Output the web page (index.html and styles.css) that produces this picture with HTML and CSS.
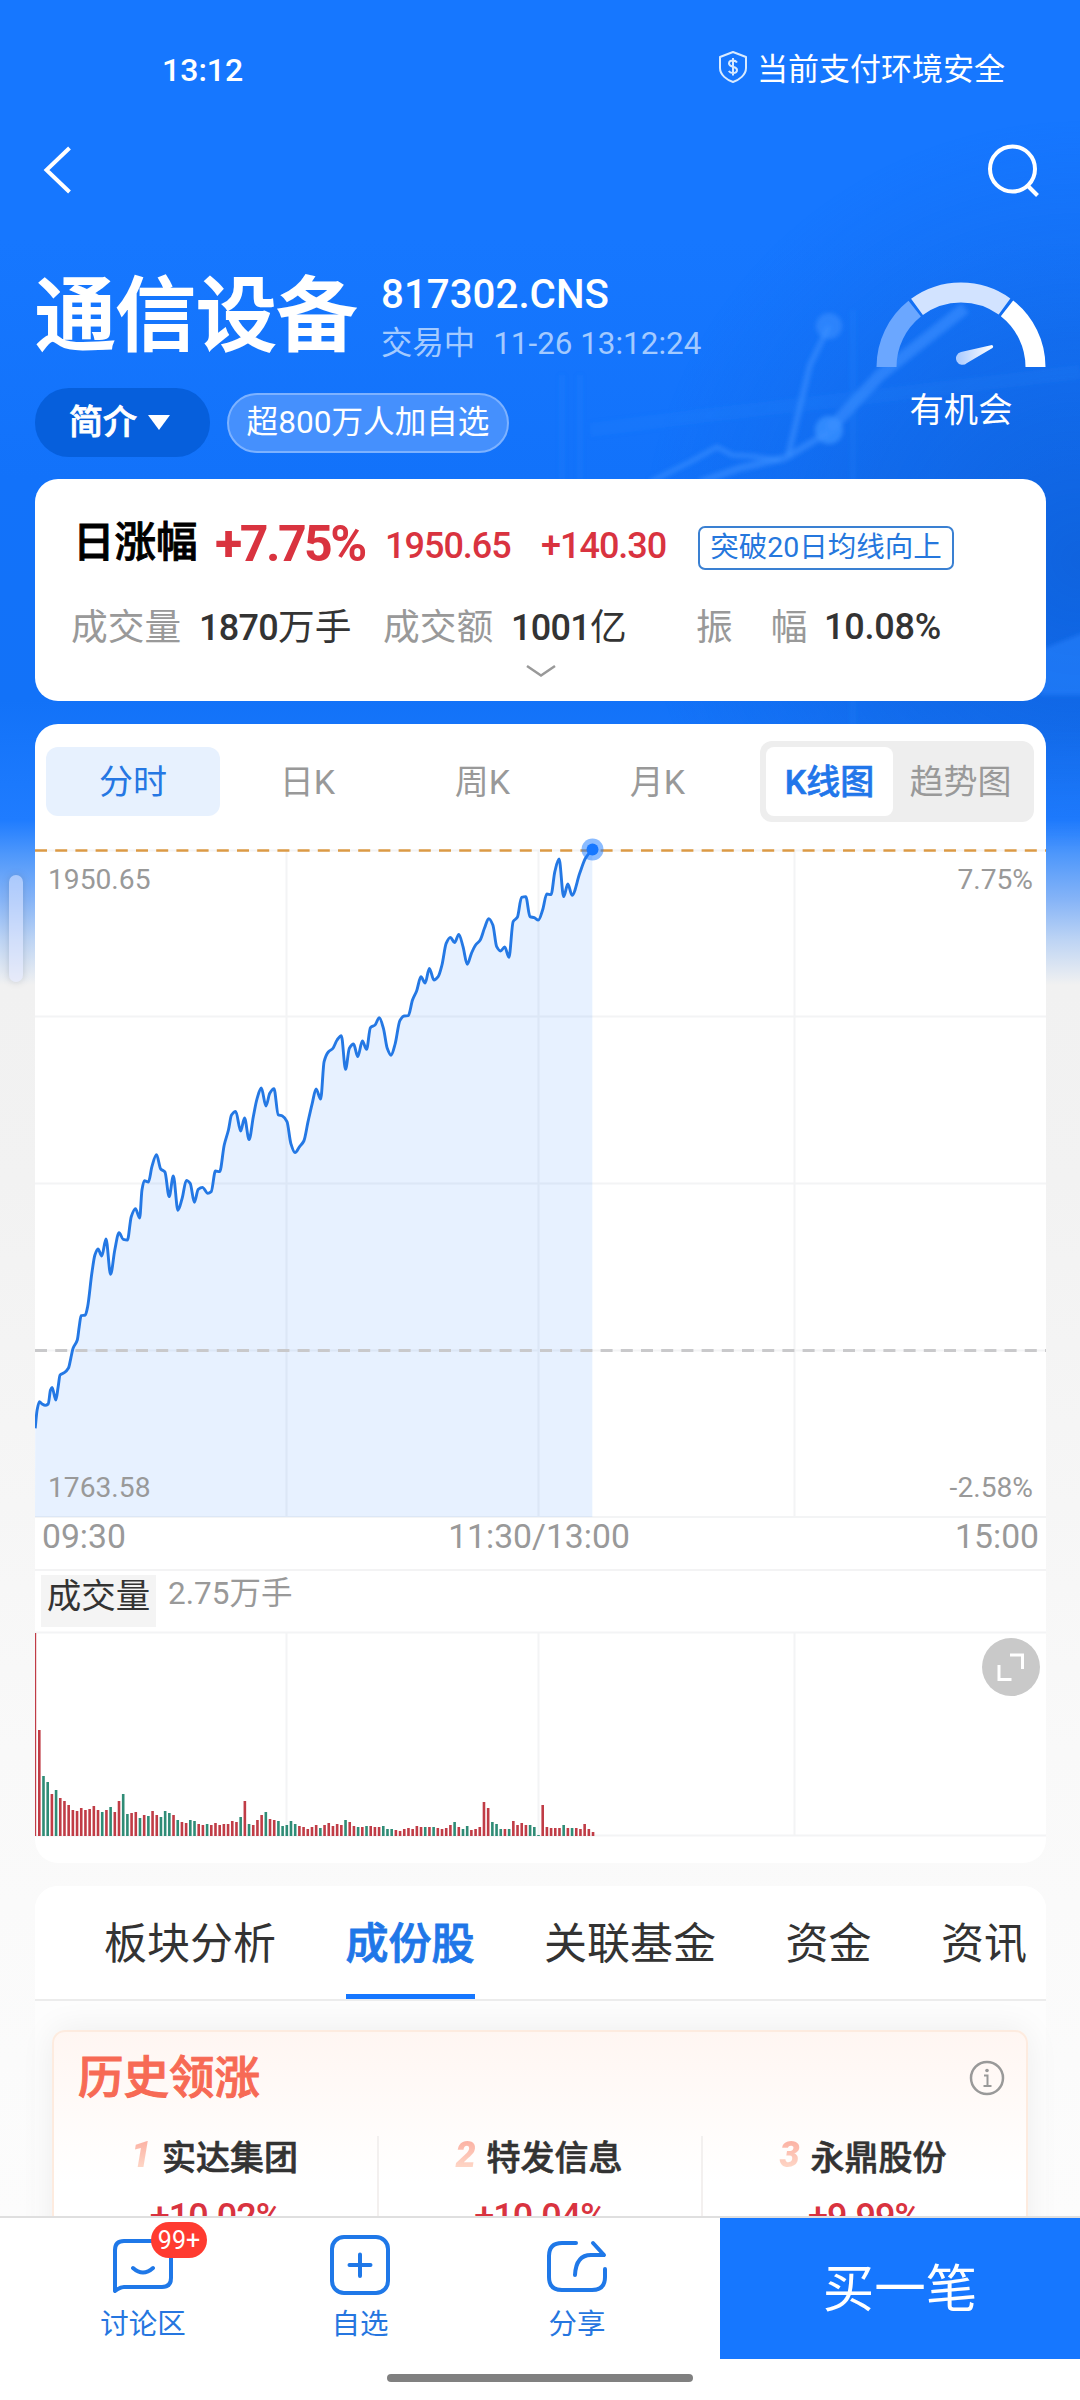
FILE: index.html
```html
<!DOCTYPE html>
<html lang="zh-CN">
<head>
<meta charset="utf-8">
<title>通信设备</title>
<link rel="stylesheet" href="styles.css">
</head>
<body>
<div class="app">
  <main class="page">
    <svg class="backdrop" viewBox="0 0 1080 985" aria-hidden="true">
      <defs>
        <radialGradient id="shade" gradientUnits="userSpaceOnUse" cx="1080" cy="560" r="440"><stop offset="0" stop-color="#0d55c4" stop-opacity=".5"/><stop offset=".5" stop-color="#0f5ace" stop-opacity=".32"/><stop offset="1" stop-color="#1060d8" stop-opacity="0"/></radialGradient>
        <filter id="soft" filterUnits="userSpaceOnUse" x="0" y="200" width="1080" height="700"><feGaussianBlur stdDeviation="2.2"/></filter>
        <linearGradient id="fade" x1="0" y1="0" x2="0" y2="1"><stop offset="0" stop-color="#fff"/><stop offset=".74" stop-color="#fff"/><stop offset=".86" stop-color="#000"/></linearGradient>
        <mask id="fademask"><rect width="1080" height="985" fill="url(#fade)"/></mask>
      </defs>
      <g mask="url(#fademask)">
        <rect width="1080" height="985" fill="url(#shade)"/>
        <g filter="url(#soft)" fill="none" stroke="#3a90ff" stroke-opacity=".6" stroke-linejoin="round">
          <path d="M650 482L690 462L717 447L732 455L750 456L780 460" stroke-width="5"/>
          <path d="M788 456L810 365L829 326" stroke-width="6"/>
          <path d="M700 482L740 468L785 458L829 432" stroke-width="7"/>
          <path d="M829 430L880 375L965 308" stroke-width="12"/>
          <path d="M853 310V790M562 375V480M580 375V480" stroke-width="6" stroke-opacity=".12"/>
          <path d="M590 430L700 416L860 398L1080 372" stroke-width="14" stroke-opacity=".1"/>
          <circle cx="829" cy="326" r="13" fill="#3a90ff" fill-opacity=".6" stroke="none"/>
          <circle cx="829" cy="430" r="14" fill="#3a90ff" fill-opacity=".8" stroke="none"/>
          <path d="M1040 650L1090 630V695H1040Z" fill="#2c84ff" fill-opacity=".55" stroke="none"/>
        </g>
      </g>
    </svg>

    <div class="statusbar">
      <span class="clock">13:12</span>
      <span class="secure">
        <svg width="30" height="34" viewBox="0 0 30 34" fill="none" stroke="#d8eaff" stroke-width="2"><path d="M15 2L28 7V18C28 25 21 30 15 32C9 30 2 25 2 18V7Z" stroke-linejoin="round"/><path d="M19 12.500C18 11 16.500 10.500 15 10.500C12.500 10.500 11 11.700 11 13.500C11 17.800 19 15.800 19 20C19 22 17.300 23 15 23C13 23 11.600 22.300 10.800 21M15 8V25.500"/></svg>
        当前支付环境安全
      </span>
    </div>

    <div class="navbar">
      <svg width="34" height="50" viewBox="0 0 34 50" fill="none" stroke="#fff" stroke-width="4"><path d="M31.500 3L8.500 25L31.500 47"/></svg>
      <svg width="54" height="54" viewBox="0 0 54 54" fill="none" stroke="#fff" stroke-width="4"><circle cx="25.500" cy="26" r="22.500"/><path d="M40 42L50.500 52.500"/></svg>
    </div>

    <header class="head">
      <div class="head-main">
        <div class="title-row">
          <h1>通信设备</h1>
          <div class="meta">
            <div class="code">817302.CNS</div>
            <div class="state"><span>交易中</span><span>11-26 13:12:24</span></div>
          </div>
        </div>
        <div class="chips">
          <span class="intro">简介<i class="tri"></i></span>
          <span class="fans">超800万人加自选</span>
        </div>
      </div>
      <div class="gauge">
        <svg width="170" height="86" viewBox="0 0 170 86">
          <defs><linearGradient id="needle"><stop offset="0" stop-color="#a9caff"/><stop offset="1" stop-color="#fff"/></linearGradient></defs>
          <g fill="none" stroke-width="20">
            <path d="M10.500 85A74.500 74.500 0 0 1 38.700 26.700" stroke="#6ba7ff"/>
            <path d="M41 24.900A74.500 74.500 0 0 1 128.500 24.500" stroke="#d2e3ff"/>
            <path d="M131 26.400A74.500 74.500 0 0 1 159.500 85" stroke="#fff"/>
          </g>
          <path d="M85 70L116 63Q118 64 116.500 66L91 81A6.500 6.500 0 1 1 85 70Z" fill="url(#needle)"/>
        </svg>
        <span>有机会</span>
      </div>
    </header>

    <section class="card quote">
      <div class="quote-top">
        <span class="q-name">日涨幅</span><span class="q-pct">+7.75%</span><span class="q-num">1950.65</span><span class="q-num q-diff">+140.30</span><span class="q-tag">突破20日均线向上</span>
      </div>
      <div class="quote-row">
        <span class="lab">成交量</span><span class="val"><b>1870</b>万手</span>
        <span class="lab">成交额</span><span class="val"><b>1001</b>亿</span>
        <span class="lab lab-wide"><span>振</span><span>幅</span></span><span class="val val-num"><b>10.08%</b></span>
      </div>
      <svg class="more" width="30" height="14" viewBox="0 0 30 14" fill="none" stroke="#999" stroke-width="2.500"><path d="M1 2L15 11.500L29 2"/></svg>
    </section>

    <section class="card chart">
      <div class="periods">
        <span class="period on">分时</span><span class="period">日K</span><span class="period">周K</span><span class="period">月K</span>
        <div class="switch"><span class="sw on">K线图</span><span class="sw">趋势图</span></div>
      </div>
      <div class="price">
        <svg class="price-svg" width="1011" height="690" viewBox="0 0 1011 690">
          <path class="grid" d="M0 20.500H1011M0 186.500H1011M0 353.500H1011M0 520.500H1011M0 687H1011M251.500 20V687M503.500 20V687M759.500 20V687"/>
          <path id="area" fill="#1677ff" fill-opacity=".1"/>
          <path d="M0 520.500H1011" stroke="#c9c9cb" stroke-width="3" stroke-dasharray="12 8.200"/>
          <path d="M0 20.500H1011" stroke="#dc9a45" stroke-width="2.500" stroke-dasharray="12 8.200"/>
          <path id="line" fill="none" stroke="#2478e4" stroke-width="2.900" stroke-linejoin="round"/>
          <circle cx="557.500" cy="19.500" r="11" fill="#1677ff" fill-opacity=".5"/><circle cx="557.500" cy="19.500" r="6" fill="#1677ff"/>
        </svg>
        <span class="axis tl">1950.65</span><span class="axis tr">7.75%</span>
        <span class="axis bl">1763.58</span><span class="axis br">-2.58%</span>
      </div>
      <div class="times"><span>09:30</span><span>11:30/13:00</span><span>15:00</span></div>
      <div class="vol-head"><span class="vol-name">成交量</span><span class="vol-val">2.75万手</span></div>
      <div class="volume">
        <svg id="bars" class="vol-svg" width="1011" height="206" viewBox="0 0 1011 206">
          <path class="grid" d="M0 1.500H1011M0 204.500H1011M251.500 1V204M503.500 1V204M759.500 1V204"/>
        </svg>
        <span class="expand"><svg width="58" height="58" viewBox="0 0 58 58" fill="none" stroke="#fff" stroke-width="3"><path d="M28 17H40.500V31M17 27V41.500H29.500"/></svg></span>
      </div>
    </section>

    <section class="card parts">
      <nav class="tabs"><span>板块分析</span><span class="on">成份股</span><span>关联基金</span><span>资金</span><span>资讯</span></nav>
      <div class="leaders">
        <div class="leaders-head">
          <h2>历史领涨</h2>
          <svg width="36" height="36" viewBox="0 0 36 36" fill="none" stroke="#999" stroke-width="2.500"><circle cx="18" cy="18" r="16"/><path d="M15 15.500H18.500V25.500M14.500 26H22.500" stroke-width="2"/><circle cx="18" cy="10.500" r="1.800" fill="#999" stroke="none"/></svg>
        </div>
        <div class="rank">
          <div class="stock"><div class="s-name"><i>1</i>实达集团</div><div class="s-pct">+10.02%</div></div>
          <div class="stock"><div class="s-name"><i>2</i>特发信息</div><div class="s-pct">+10.04%</div></div>
          <div class="stock"><div class="s-name"><i>3</i>永鼎股份</div><div class="s-pct">+9.99%</div></div>
        </div>
      </div>
    </section>
    <span class="handle"></span>
  </main>

  <footer class="bottom">
    <div class="actions">
      <div class="act">
        <svg width="64" height="64" viewBox="0 0 64 64" fill="none" stroke="#1f78e8" stroke-width="4" stroke-linejoin="round" stroke-linecap="round"><path d="M4 58V17Q4 8 13 8H51Q60 8 60 17V45Q60 54 51 54H13Q9 54 4 58ZM22 35Q32 44 42 35"/></svg>
        <em class="badge">99+</em>
        <span>讨论区</span>
      </div>
      <div class="act">
        <svg width="64" height="64" viewBox="0 0 64 64" fill="none" stroke="#1f78e8" stroke-width="4" stroke-linecap="round"><rect x="4" y="4" width="56" height="56" rx="12"/><path d="M32 21.500V43M21.500 32H42.500"/></svg>
        <span>自选</span>
      </div>
      <div class="act">
        <svg width="64" height="64" viewBox="0 0 64 64" fill="none" stroke="#1f78e8" stroke-width="4" stroke-linecap="round" stroke-linejoin="round"><path d="M31 10H17Q4 10 4 23V44Q4 57 17 57H47Q60 57 60 44V36"/><path d="M48 10L59 22H46Q31 22 30 42"/></svg>
        <span>分享</span>
      </div>
      <div class="buy">买一笔</div>
    </div>
    <div class="home"></div>
  </footer>
</div>
<script src="chart.js"></script>
</body>
</html>
```
FILE: styles.css
```css
* { box-sizing: border-box; }
body { margin: 0; font-family: Roboto, "Noto Sans CJK SC", sans-serif; color: #333; }
h1, h2 { margin: 0; font-weight: 500; }
i, em { font-style: normal; }
svg { display: block; flex: none; }

.app { width: 1080px; height: 2400px; display: flex; flex-direction: column; overflow: hidden; }
.page {
  position: relative; height: 2216px; flex: none; overflow: hidden; white-space: nowrap;
  background: linear-gradient(#1677ff 0, #1677ff 240px, #1272fa 480px, #1272f8 700px, #1f7cff 820px, #4f98fb 855px, #86b4f7 900px, #bdd4f4 940px, #f1f1f1 985px, #f2f2f2 1180px, #f9f9f9 1750px, #fcfcfc 2216px);
}
.backdrop { position: absolute; left: 0; top: 0; width: 1080px; height: 985px; }
.page > div, .page > header, .page > section { position: relative; }

.statusbar { height: 136px; padding: 0 75px 0 162px; display: flex; justify-content: space-between; align-items: center; color: #fff; font-size: 31px; }
.clock { font-size: 32px; font-weight: 500; padding-top: 3px; }
.secure { display: flex; align-items: center; gap: 9px; height: 36px; margin-bottom: 3px; }
.navbar { height: 68px; margin-bottom: 60px; padding: 0 39px 0 38px; display: flex; justify-content: space-between; align-items: center; }

.head { height: 215px; display: flex; justify-content: space-between; padding: 0 34px 0 35px; color: #fff; }
.title-row { height: 124px; display: flex; }
h1 { width: 346px; font-size: 80.500px; line-height: 105px; -webkit-text-stroke: 1.800px #fff; }
.code { font-size: 40.300px; line-height: 48px; margin-top: 7px; font-weight: 500; }
.state { display: flex; gap: 18px; font-size: 31.400px; line-height: 44px; margin-top: 3px; color: #a3caff; }
.chips { display: flex; align-items: center; gap: 17px; height: 69px; }
.intro { width: 175px; height: 69px; border-radius: 34px; background: #065fdc; display: flex; align-items: center; justify-content: center; gap: 11px; padding-right: 6px; font-size: 34px; line-height: 67px; font-weight: 500; -webkit-text-stroke: .8px #fff; }
.tri { border: 11px solid transparent; border-top: 15px solid #fff; border-bottom: 0; }
.fans { width: 282px; height: 60px; border-radius: 30px; border: 2px solid #7db2ff; background: #4590fd; text-align: center; font-size: 31.600px; line-height: 56px; }
.gauge { width: 170px; padding-top: 18px; text-align: center; font-size: 34.300px; line-height: 50px; }
.gauge span { display: block; margin-top: 17px; }

.card { margin: 0 34px 0 35px; background: #fff; border-radius: 23px; }
.quote { height: 222px; padding-top: 38px; }
.quote-top { display: flex; align-items: center; height: 54px; padding-left: 38px; color: #d9333f; }
.q-name { width: 142px; height: 60px; line-height: 57px; color: #000; font-size: 41.500px; font-weight: 500; -webkit-text-stroke: .9px #000; }
.q-pct { width: 170px; font-size: 50px; font-weight: 700; letter-spacing: -2.500px; }
.q-num { width: 156px; font-size: 36px; font-weight: 500; letter-spacing: -1px; padding-top: 4px; }
.q-diff { width: 157px; }
.q-tag { width: 256px; height: 44px; margin-top: 8px; border: 2px solid #3a80d2; border-radius: 7px; color: #2577dd; font-size: 28.500px; line-height: 39px; text-align: center; }
.quote-row { display: grid; grid-template-columns: 128px 184px 128px 185px 128px auto; justify-content: start; height: 70px; align-items: center; padding-left: 36px; margin-top: 18px; font-size: 36.700px; }
.lab { color: #999; }
.lab-wide { display: flex; gap: 38px; }
.val b { font-weight: 500; letter-spacing: -.700px; font-size: 36px; }
.val-num { padding-top: 5px; }
.val-num b { letter-spacing: -.2px; }
.more { margin: 5px auto 0; }

.chart { height: 1139px; margin-top: 23px; padding-top: 17px; }
.periods { display: flex; align-items: center; height: 81px; padding-left: 11px; font-size: 34px; color: #999; }
.period { width: 175px; height: 69px; line-height: 71px; text-align: center; border-radius: 12px; }
.period.on { background: #e7f1fe; color: #2577e3; width: 174px; }
.switch { width: 274px; height: 81px; padding: 6px; margin-left: 15px; border-radius: 12px; background: #eee; display: flex; }
.sw { width: 137px; line-height: 71px; text-align: center; }
.sw.on { width: 129px; border-radius: 8px; background: #fff; color: #2176ea; font-weight: 500; -webkit-text-stroke: .6px #2176ea; }
.price { position: relative; height: 696px; padding-top: 8px; }
.grid { fill: none; stroke: #f3f4f5; stroke-width: 2; }
.axis { position: absolute; font-size: 28.200px; line-height: 32px; color: #999; }
.tl { left: 13px; top: 42px; } .tr { right: 13px; top: 42px; }
.bl { left: 13px; top: 650px; } .br { right: 13px; top: 650px; }
.times { display: grid; grid-template-columns: 1fr 1fr 1fr; height: 53px; padding: 0 7px 0 7px; border-bottom: 2px solid #f3f3f4; font-size: 33.700px; line-height: 38px; color: #999; }
.times span:nth-child(2) { text-align: center; padding-right: 3px; }
.times span:nth-child(3) { text-align: right; }
.vol-head { display: flex; height: 60px; padding: 4px 0 0 6px; }
.vol-name { width: 115px; height: 52px; background: #f4f4f4; text-align: center; font-size: 34.500px; line-height: 42px; }
.vol-val { margin-left: 12px; font-size: 31.500px; line-height: 37px; color: #999; }
.volume { position: relative; }
.expand { position: absolute; right: 6px; top: 7px; width: 58px; height: 58px; border-radius: 50%; background: #c9c9c9; }

.parts { height: 360px; margin-top: 23px; background: linear-gradient(#fff 114px, #fdfdfd 115px); }
.tabs { display: flex; gap: 69.500px; height: 115px; padding-left: 69px; border-bottom: 2px solid #ececec; font-size: 43px; line-height: 116px; background: #fff; border-radius: 23px 23px 0 0; overflow: hidden; }
.tabs .on { color: #1f77e8; font-weight: 500; -webkit-text-stroke: .9px #1f77e8; border-bottom: 6px solid #1677ff; height: 114px; }
.leaders { height: 300px; margin: 29px 18px 0 17px; border: 2px solid #fdebdf; border-radius: 13px; background: linear-gradient(#fff6f2, #fff 150px); box-shadow: 0 0 34px rgba(0, 0, 0, .07); }
.leaders-head { display: flex; justify-content: space-between; align-items: center; height: 92px; padding: 0 21px 0 24px; }
h2 { font-size: 45.500px; line-height: 60px; padding-top: 1px; color: #f76a55; -webkit-text-stroke: 1px #f76a55; }
.rank { display: grid; grid-template-columns: 325px 324px 322px; margin-top: 12px; }
.stock { height: 180px; border-right: 2px solid #f3f0ef; text-align: center; }
.stock:last-child { border: 0; }
.s-name { display: flex; justify-content: center; align-items: center; gap: 9px; height: 38px; padding-right: 2px; font-size: 34px; font-weight: 500; -webkit-text-stroke: .6px #333; }
.s-name i { font-size: 36px; font-weight: 900; font-style: italic; line-height: 40px; padding-right: 2px; -webkit-text-stroke: 0; color: transparent; background: linear-gradient(#fbaa9c, #ffe0d0); background-clip: text; -webkit-background-clip: text; }
.s-pct { margin-top: 22px; font-size: 36px; line-height: 42px; font-weight: 500; letter-spacing: -1px; color: #d9333f; }

.handle { position: absolute; left: 9px; top: 875px; width: 14px; height: 107px; border-radius: 7px; background: rgba(225, 232, 255, .55); box-shadow: 0 0 7px rgba(80, 90, 110, .25); }

.bottom { flex: 1; background: #fff; border-top: 2px solid #dfdfdf; }
.actions { display: grid; grid-template-columns: 286px 148px 286px 360px; height: 141px; }
.act { position: relative; display: flex; flex-direction: column; align-items: center; padding-top: 15px; color: #2576e0; font-size: 28.500px; line-height: 40px; }
.act span { margin-top: 8px; }
.badge { position: absolute; left: 151px; top: 4px; width: 56px; height: 36px; border-radius: 18px; background: #ff3b30; color: #fff; font-size: 25px; line-height: 37px; text-align: center; }
.buy { background: #1677ff; color: #fff; font-size: 51.500px; line-height: 144px; height: 141px; text-align: center; }
.home { width: 306px; height: 8px; margin: 15px auto 0; border-radius: 4px; background: #808080; }
```
FILE: chart.js
```js
// Intraday price samples: x, y on the plotting grid (x step .38265px, y step 1/3px).
const price = [[92,1825],[97,1770],[103,1745],[110,1752],[118,1756],[126,1752],[132,1710],[136,1702],[146,1740],[152,1700],[157,1665],[168,1658],[179,1644],[185,1615],[191,1585],[202,1560],[207,1520],[212,1487],[223,1485],[229,1460],[240,1360],[248,1305],[256,1287],[266,1308],[277,1257],[289,1363],[300,1290],[311,1238],[322,1258],[333,1260],[343,1190],[354,1166],[365,1194],[371,1110],[377,1082],[388,1086],[397,1040],[409,1004],[420,1047],[431,1056],[442,1130],[453,1068],[465,1171],[476,1135],[487,1081],[497,1090],[508,1147],[518,1108],[529,1102],[543,1120],[552,1115],[563,1053],[574,1055],[586,975],[597,930],[605,885],[616,874],[629,933],[639,894],[651,959],[662,890],[672,835],[683,804],[695,858],[705,820],[716,806],[727,884],[738,888],[750,905],[760,970],[771,998],[783,980],[794,963],[805,905],[816,850],[826,807],[838,837],[847,725],[858,696],[870,685],[881,660],[892,647],[903,748],[913,685],[924,672],[935,710],[947,663],[958,688],[968,623],[980,615],[991,593],[1002,625],[1012,685],[1022,706],[1033,670],[1045,602],[1056,588],[1067,587],[1078,540],[1089,512],[1100,470],[1111,489],[1122,445],[1134,480],[1145,470],[1155,435],[1166,370],[1177,352],[1188,368],[1199,343],[1210,380],[1221,433],[1232,400],[1243,375],[1255,360],[1266,325],[1277,296],[1288,315],[1298,380],[1308,393],[1319,381],[1330,412],[1341,305],[1352,292],[1363,232],[1374,230],[1385,290],[1396,293],[1407,300],[1418,270],[1429,222],[1440,224],[1450,155],[1461,117],[1473,230],[1484,192],[1495,226],[1515,160],[1530,115],[1548,88]]
  .map(([x, y]) => [x * .38265 - 35, y / 3 - 10]);

// Monotone cubic curve through the samples
const slope = (a, b) => (b[1] - a[1]) / (b[0] - a[0]);
const tangent = price.map((p, i) => {
  if (i === 0) return slope(p, price[1]);
  if (i === price.length - 1) return slope(price[i - 1], p);
  const s0 = slope(price[i - 1], p), s1 = slope(p, price[i + 1]);
  return s0 * s1 <= 0 ? 0 : 2 * s0 * s1 / (s0 + s1);
});
let d = 'M' + price[0].join(' ');
for (let i = 1; i < price.length; i++) {
  const a = price[i - 1], b = price[i], h = (b[0] - a[0]) / 3;
  d += `C${a[0] + h} ${a[1] + tangent[i - 1] * h} ${b[0] - h} ${b[1] - tangent[i] * h} ${b[0]} ${b[1]}`;
}
document.getElementById('line').setAttribute('d', d);
document.getElementById('area').setAttribute('d', d + 'V687H0Z');

// Minute volumes; "g" marks a falling minute
const volume = '203 106 60g 54g 42 46g 38 35 31 26 25 28 26 27 30 26 24g 26 29g 24 35 42g 22g 23 24 18g 21 20g 25 21 19g 25g 23g 21 16g 14 13 16g 15g 12 11 12g 11 13 11 12 12 15 14 19g 35 12g 11 16 21 24g 17 16 15g 10g 11g 15g 12g 10 9 7 9 11 8g 11 13 10 12 11 16g 14 10 9g 9 10g 10 9 9 10g 7g 7g 6 5 7 8 7 10 9 9g 9 9g 8 7 8 11 14g 9 7g 10g 6 7 9 34 28 14g 12g 7g 7 7g 15 11 13 11 11g 9g 1g 31 9 8 8 8 11g 8 8g 8 7 12 7 4'.split(' ');
const svg = document.getElementById('bars');
volume.forEach((v, i) => {
  const r = document.createElementNS('http://www.w3.org/2000/svg', 'rect'), h = parseInt(v, 10);
  r.setAttribute('x', i ? 3 + 4.195 * (i - 1) : 0);
  r.setAttribute('y', 205 - h);
  r.setAttribute('width', i ? 2.6 : 1.2);
  r.setAttribute('height', h);
  r.setAttribute('fill', v.endsWith('g') ? '#2f8c76' : '#c03c46');
  svg.appendChild(r);
});
```
